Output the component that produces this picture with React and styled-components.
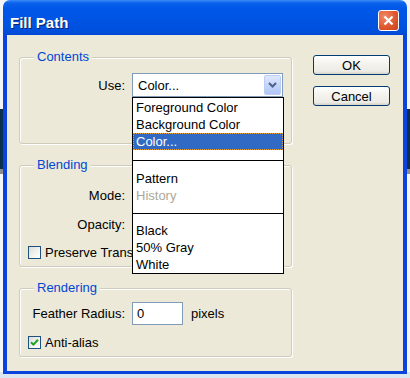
import React from "react";
import styled, { createGlobalStyle } from "styled-components";

const Global = createGlobalStyle`
  html, body { margin: 0; }
  body {
    font-family: "Liberation Sans", Arial, sans-serif;
    font-size: 13px;
    color: #000;
    background: linear-gradient(
      to bottom,
      #f3f5f7 0,
      #f3f5f7 109px,
      #0c2f4e 109px,
      #0c2f4e 169px,
      #8c8c8c 169px,
      #8c8c8c 174px,
      #f5f6f8 174px,
      #f5f6f8 372px,
      #dbe6f1 372px
    );
  }
`;

const Page = styled.div`
  height: 378px;
  padding-left: 3px;
  overflow: hidden;
`;

const Window = styled.div`
  width: 404px;
  display: flex;
  flex-direction: column;
`;

const TitleBar = styled.div`
  height: 35px;
  box-sizing: border-box;
  display: flex;
  align-items: flex-start;
  justify-content: space-between;
  padding: 10px 8px 0 7px;
  border-radius: 7px 7px 0 0;
  background: linear-gradient(
    to bottom,
    #3c8df7 0,
    #0a62ec 3px,
    #0058e8 8px,
    #0055e4 50%,
    #0050de 85%,
    #0048d2 100%
  );
`;

const Title = styled.div`
  font-weight: bold;
  font-size: 15px;
  line-height: 24px;
  padding-top: 1px;
  color: #fff;
  text-shadow: 1px 1px #0a1e6e;
`;

const CloseButton = styled.div`
  width: 21px;
  height: 21px;
  box-sizing: border-box;
  border: 1px solid #fff;
  border-radius: 3px;
  background: radial-gradient(circle at 30% 30%, #f08a6a 0, #e0582e 55%, #c8401c 100%);
  display: flex;
  align-items: center;
  justify-content: center;
`;

const Frame = styled.div`
  border: solid #0a44dc;
  border-width: 0 4px 3px 4px;
  box-shadow: inset 1px 0 #5a8cf0, inset -1px 0 #0834b8;
`;

const Client = styled.div`
  height: 336px;
  box-sizing: border-box;
  background: #ece9d8;
  display: grid;
  grid-template-columns: 273px 77px;
  column-gap: 21px;
  padding: 14px 13px 0 12px;
  align-items: start;
`;

const Groups = styled.div`
  display: flex;
  flex-direction: column;
  gap: 13px;
`;

const Group = styled.fieldset`
  margin: 0;
  padding: 0;
  border: 1px solid #cfccbd;
  border-radius: 3px;
  box-shadow: inset 1px 1px #fff, 1px 1px #fff;
  min-width: 0;
`;

const Legend = styled.legend`
  margin-left: 14px;
  padding: 0 3px;
  line-height: 16px;
  color: #0046d5;
  background: #ece9d8;
`;

const GroupBody = styled.div`
  height: ${(p) => p.$h}px;
  box-sizing: border-box;
  padding-top: ${(p) => p.$top}px;
  display: flex;
  flex-direction: column;
`;

const Row = styled.div`
  display: grid;
  grid-template-columns: 105px auto;
  column-gap: 7px;
  align-items: center;
  margin-top: ${(p) => p.$mt || 0}px;
`;

const Label = styled.label`
  text-align: right;
  white-space: nowrap;
`;

const Field = styled.div`
  display: flex;
  align-items: center;
  gap: 8px;
`;

const SelectWrap = styled.div`
  position: relative;
  width: ${(p) => p.$w}px;
`;

const Select = styled.div`
  height: ${(p) => p.$h}px;
  box-sizing: border-box;
  border: 1px solid #7f9db9;
  background: #fff;
  display: flex;
  align-items: center;
  justify-content: space-between;
  padding: 1px 1px 1px 5px;
`;

const ArrowButton = styled.div`
  width: 17px;
  height: 100%;
  box-sizing: border-box;
  border: 1px solid #bccdf5;
  border-radius: 2px;
  background: linear-gradient(to bottom, #dfe8fd 0, #c3d4fb 55%, #b1c6f6 100%);
  display: flex;
  align-items: center;
  justify-content: center;
`;

const TextInput = styled.div`
  width: ${(p) => p.$w}px;
  height: 23px;
  box-sizing: border-box;
  border: 1px solid #7f9db9;
  background: #fff;
  padding-left: 4px;
  display: flex;
  align-items: center;
`;

const List = styled.div`
  position: absolute;
  top: 100%;
  left: 0;
  width: 152px;
  z-index: 2;
  box-sizing: border-box;
  border: 1px solid #000;
  background: #fff;
  padding-top: 1px;
`;

const Item = styled.div`
  height: 17px;
  line-height: 17px;
  padding-left: 3px;
  box-sizing: border-box;
  white-space: nowrap;
  color: ${(p) => (p.$active ? "#fff" : p.$disabled ? "#aca899" : "#000")};
  background: ${(p) => (p.$active ? "#316ac5" : "transparent")};
  outline: ${(p) => (p.$active ? "1px dotted #e9a23a" : "none")};
  outline-offset: -1px;
`;

const Separator = styled.div`
  height: ${(p) => p.$h}px;
  display: flex;
  align-items: center;
  &::after {
    content: "";
    flex: 1;
    height: 1px;
    background: #000;
  }
`;

const CheckRow = styled.label`
  display: flex;
  align-items: center;
  gap: 4px;
  padding-left: 8px;
  height: 13px;
  white-space: nowrap;
  margin-top: ${(p) => p.$mt || 0}px;
`;

const CheckBox = styled.span`
  width: 13px;
  height: 13px;
  box-sizing: border-box;
  border: 1px solid #1c5180;
  background: linear-gradient(135deg, #dcdcd7 0, #f4f4f0 60%, #fff 100%);
  display: flex;
  align-items: center;
  justify-content: center;
  flex-shrink: 0;
`;

const Buttons = styled.div`
  display: flex;
  flex-direction: column;
  gap: 11px;
  padding-top: 6px;
`;

const Button = styled.div`
  height: 20px;
  box-sizing: border-box;
  border: 1px solid #003c74;
  border-radius: 3px;
  background: linear-gradient(to bottom, #ffffff 0, #f4f3ee 40%, #ecebe6 85%, #d6d0c5 100%);
  display: flex;
  align-items: center;
  justify-content: center;
`;

const Checkbox = ({ checked, mt, children }) => (
  <CheckRow $mt={mt}>
    <CheckBox>
      {checked && (
        <svg width="9" height="9" viewBox="0 0 9 9">
          <path d="M1 4.2 L3.4 6.6 L8 1.8" fill="none" stroke="#21a121" strokeWidth="2" />
        </svg>
      )}
    </CheckBox>
    {children}
  </CheckRow>
);

const Chevron = () => (
  <svg width="9" height="6" viewBox="0 0 9 6">
    <path d="M1 1 L4.5 4.5 L8 1" fill="none" stroke="#4d6185" strokeWidth="2" />
  </svg>
);

const fillOptions = [
  { label: "Foreground Color" },
  { label: "Background Color" },
  { label: "Color...", active: true },
  { sep: 20 },
  { label: "Pattern" },
  { label: "History", disabled: true },
  { sep: 18 },
  { label: "Black" },
  { label: "50% Gray" },
  { label: "White" },
];

export default function App() {
  return (
    <Page>
      <Global />
      <Window>
        <TitleBar>
          <Title>Fill Path</Title>
          <CloseButton>
            <svg width="11" height="11" viewBox="0 0 11 11">
              <path d="M1.5 1.5 L9.5 9.5 M9.5 1.5 L1.5 9.5" stroke="#fff" strokeWidth="2.2" />
            </svg>
          </CloseButton>
        </TitleBar>
        <Frame>
          <Client>
            <Groups>
              <Group>
                <Legend>Contents</Legend>
                <GroupBody $h={78} $top={8}>
                  <Row>
                    <Label>Use:</Label>
                    <SelectWrap $w={151}>
                      <Select $h={24}>
                        <span>Color...</span>
                        <ArrowButton>
                          <Chevron />
                        </ArrowButton>
                      </Select>
                      <List>
                        {fillOptions.map((o, i) =>
                          o.sep ? (
                            <Separator key={i} $h={o.sep} />
                          ) : (
                            <Item key={i} $active={o.active} $disabled={o.disabled}>
                              {o.label}
                            </Item>
                          )
                        )}
                      </List>
                    </SelectWrap>
                  </Row>
                </GroupBody>
              </Group>

              <Group>
                <Legend>Blending</Legend>
                <GroupBody $h={93} $top={11}>
                  <Row>
                    <Label>Mode:</Label>
                    <SelectWrap $w={151}>
                      <Select $h={22} />
                    </SelectWrap>
                  </Row>
                  <Row $mt={7}>
                    <Label>Opacity:</Label>
                    <Field>
                      <TextInput $w={51} />
                    </Field>
                  </Row>
                  <Checkbox mt={10}>Preserve Transparency</Checkbox>
                </GroupBody>
              </Group>

              <Group>
                <Legend>Rendering</Legend>
                <GroupBody $h={60} $top={6}>
                  <Row>
                    <Label>Feather Radius:</Label>
                    <Field>
                      <TextInput $w={51}>0</TextInput>
                      <span>pixels</span>
                    </Field>
                  </Row>
                  <Checkbox checked mt={11}>Anti-alias</Checkbox>
                </GroupBody>
              </Group>
            </Groups>

            <Buttons>
              <Button>OK</Button>
              <Button>Cancel</Button>
            </Buttons>
          </Client>
        </Frame>
      </Window>
    </Page>
  );
}
